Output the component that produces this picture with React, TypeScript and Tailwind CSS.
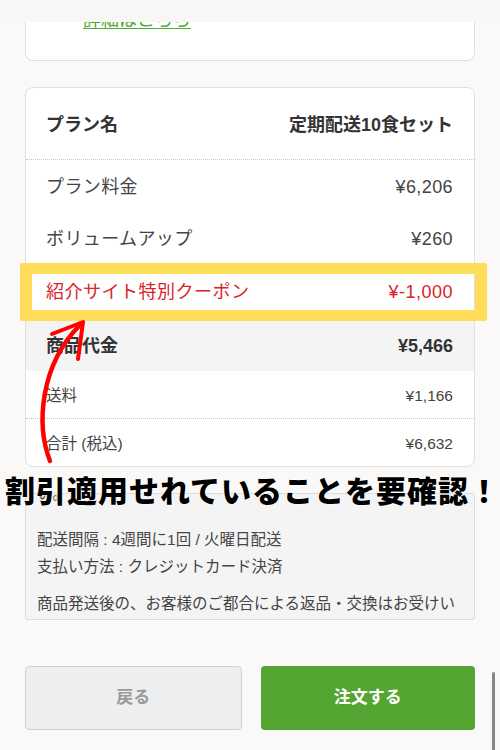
import React from 'react';

const font = 'font-["Liberation_Sans","Noto_Sans_CJK_JP",sans-serif]';

interface RowProps {
  label: string;
  value: string;
  className?: string;
  textClass?: string;
}

const Row: React.FC<RowProps> = ({ label, value, className = '', textClass = '' }) => (
  <div className={`flex items-center justify-between pl-5 pr-[21px] ${className}`}>
    <span className={textClass}>{label}</span>
    <span className={textClass}>{value}</span>
  </div>
);

export default function App() {
  return (
    <div className={`relative w-[500px] h-[750px] overflow-hidden bg-[#faf9f7] text-[#333] ${font}`}>
      {/* Top strip covering the scrolled card */}
      <div className="h-[22px] bg-[#f8f7f5]" />

      {/* Previous card (scrolled) */}
      <div className="mx-[25px] h-[39px] overflow-hidden rounded-b-lg border border-t-0 border-[#e0e0e0] bg-white">
        <a className="-mt-[11px] ml-[57px] block text-[18px] leading-[18px] text-[#52a933] underline underline-offset-[2px]">
          詳細はこちら
        </a>
      </div>

      {/* Order summary */}
      <div className="mx-[25px] mt-[26px] overflow-hidden rounded-lg border border-[#e0e0e0] bg-white">
        <Row
          label="プラン名"
          value="定期配送10食セット"
          className="h-[72px] pt-[3px] border-b border-dotted border-[#c8c8c8]"
          textClass="text-[18px] font-bold text-[#333]"
        />
        <Row label="プラン料金" value="¥6,206" className="h-[52px] pt-[2px]" textClass="text-[18px] tracking-[0.4px] text-[#444]" />
        <Row label="ボリュームアップ" value="¥260" className="h-[53px] pt-[1px]" textClass="text-[18px] tracking-[0.4px] text-[#444]" />
        <Row label="紹介サイト特別クーポン" value="¥-1,000" className="h-[54px]" textClass="text-[18px] tracking-[0.5px] text-[#d8232a]" />
        <Row label="商品代金" value="¥5,466" className="h-[52px] pt-[2px] bg-[#f4f4f4]" textClass="text-[18px] font-bold text-[#333]" />
        <Row
          label="送料"
          value="¥1,166"
          className="h-[48px] pt-[2px] border-b border-dotted border-[#c8c8c8]"
          textClass="text-[15.5px] text-[#444]"
        />
        <Row label="合計 (税込)" value="¥6,632" className="h-[47px] pt-[2px]" textClass="text-[15.5px] text-[#444]" />
      </div>

      {/* Notes box */}
      <div className="mx-[25px] mt-[26px] h-[127px] overflow-hidden rounded-[3px] border border-[#dcdcdc] bg-[#f4f4f4] px-[11px] text-[15.5px] leading-[27px] text-[#444]">
        <p className="-mt-[14px]">い。</p>
        <p className="mt-[19px]">配送間隔 : 4週間に1回 / 火曜日配送</p>
        <p>支払い方法 : クレジットカード決済</p>
        <p className="mt-[10px]">商品発送後の、お客様のご都合による返品・交換はお受けいたしかねます。</p>
      </div>

      {/* Buttons */}
      <div className="mx-[25px] mt-[46px] flex gap-[19px]">
        <button className="flex h-[64px] flex-1 items-center justify-center rounded-[4px] border border-[#cfd2d4] bg-[#eceef0] text-[17px] font-bold text-[#9a9a9a]">
          戻る
        </button>
        <button className="flex h-[64px] flex-1 items-center justify-center rounded-[4px] bg-[#55a532] text-[17px] font-bold text-white">
          注文する
        </button>
      </div>

      {/* Scrollbar */}
      <div className="absolute left-[492px] top-[672px] h-[90px] w-[3px] rounded-full bg-[#888]" />

      {/* Annotation: yellow highlight */}
      <div className="absolute left-[20px] top-[263px] h-[58px] w-[467px] rounded-[2px] border-x-[12px] border-y-[11px] border-[#ffdd5b]" />

      {/* Annotation: red arrow */}
      <svg className="absolute left-0 top-0" width="500" height="750" viewBox="0 0 500 750" fill="none">
        <path d="M50 461 C 36 425, 40 365, 80 325" stroke="#f00" strokeWidth="4.5" strokeLinecap="round" />
        <path d="M52 334 L83 322 L78 359" stroke="#f00" strokeWidth="4" strokeLinecap="round" strokeLinejoin="round" />
      </svg>

      {/* Annotation: caption */}
      <div
        className={`absolute left-[5px] top-[471px] whitespace-nowrap text-[30px] font-black leading-[36px] tracking-[1px] text-black [text-shadow:0_0_2px_#fff,0_0_2px_#fff] font-["Noto_Sans_CJK_JP",sans-serif]`}
      >
        割引適用せれていることを要確認！
      </div>
    </div>
  );
}
